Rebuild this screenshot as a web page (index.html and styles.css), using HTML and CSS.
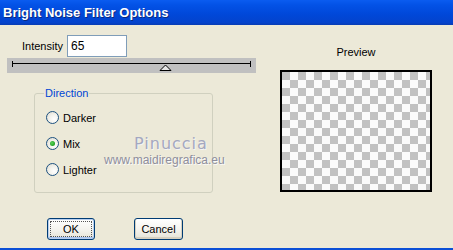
FILE: index.html
```html
<!DOCTYPE html>
<html>
<head>
<meta charset="utf-8">
<link rel="stylesheet" href="styles.css">
</head>
<body>
<div class="window">
  <div class="titlebar">Bright Noise Filter Options</div>
  <div class="content">
    <div class="left">
      <div class="intensity-row">
        <span class="label">Intensity</span>
        <div class="input">65</div>
      </div>
      <div class="slider">
        <svg width="249" height="15" viewBox="0 0 249 15">
          <line x1="5" y1="5.5" x2="243" y2="5.5" stroke="#000" stroke-width="1"/>
          <line x1="5.5" y1="3" x2="5.5" y2="9" stroke="#000" stroke-width="1"/>
          <line x1="243.5" y1="3" x2="243.5" y2="9" stroke="#000" stroke-width="1"/>
          <polygon points="153,12.5 158.5,7 164,12.5" fill="#e4e4e4" stroke="#000" stroke-width="1"/>
        </svg>
      </div>
      <fieldset class="group">
        <legend>Direction</legend>
        <div class="radio"><span class="dot"></span><span>Darker</span></div>
        <div class="radio"><span class="dot checked"></span><span>Mix</span></div>
        <div class="radio"><span class="dot"></span><span>Lighter</span></div>
      </fieldset>
      <div class="buttons">
        <button class="btn ok"><span class="focus">OK</span></button>
        <button class="btn cancel">Cancel</button>
      </div>
    </div>
    <div class="right">
      <div class="preview-label">Preview</div>
      <div class="preview"></div>
    </div>
  </div>
  <div class="watermark">
    <div class="wm-name">Pinuccia</div>
    <div class="wm-url">www.maidiregrafica.eu</div>
  </div>
</div>
</body>
</html>
```

FILE: styles.css
```css
html, body {
  margin: 0;
  padding: 0;
  background: #ece9d8;
}

.window {
  position: relative;
  width: 453px;
  height: 250px;
  box-sizing: border-box;
  background: #ece9d8;
  border-bottom: 2px solid #0b4fd6;
  font-family: "Liberation Sans", Arial, sans-serif;
  font-size: 11px;
  color: #000;
  overflow: hidden;
}

.titlebar {
  height: 25px;
  box-sizing: border-box;
  padding: 5px 0 0 3px;
  background: linear-gradient(#0a5cf0 0%, #0352e6 20%, #0047d8 60%, #0443cc 90%, #083cb4 100%);
  color: #fff;
  font-weight: bold;
  font-size: 13px;
  line-height: 15px;
  text-shadow: 1px 1px 0 #0a2a80;
}

.content {
  display: flex;
}

.left {
  width: 256px;
  display: flex;
  flex-direction: column;
}

.intensity-row {
  display: flex;
  align-items: center;
  margin-top: 10px;
  padding-left: 22px;
  height: 22px;
}

.label {
  width: 45px;
}

.input {
  width: 60px;
  height: 22px;
  box-sizing: border-box;
  border: 1px solid #7f9db9;
  background: #fff;
  padding: 3px 0 0 3px;
  font-size: 12px;
  line-height: 14px;
}

.slider {
  margin-left: 7px;
  width: 249px;
  height: 15px;
  margin-top: 1px;
  background: #c0c0c0;
}

.slider svg {
  display: block;
}

.group {
  margin: 14px 0 0 34px;
  width: 179px;
  height: 106px;
  box-sizing: border-box;
  border: 1px solid #d0d0bf;
  border-radius: 3px;
  padding: 11px 0 0 11px;
}

.group legend {
  color: #0046d5;
  padding: 0 1px;
  margin-left: -2px;
  line-height: 13px;
}

.radio {
  display: flex;
  align-items: center;
  height: 13px;
  margin-bottom: 13px;
  gap: 4px;
}

.dot {
  width: 13px;
  height: 13px;
  box-sizing: border-box;
  border-radius: 50%;
  border: 1px solid #1c5180;
  background: radial-gradient(circle at 65% 65%, #ffffff 0%, #f3f2ec 45%, #dcd9cc 100%);
  position: relative;
}

.dot.checked::after {
  content: "";
  position: absolute;
  left: 3px;
  top: 3px;
  width: 5px;
  height: 5px;
  border-radius: 50%;
  background: radial-gradient(circle at 40% 40%, #5bd35b, #21a121 70%);
}

.buttons {
  display: flex;
  margin: 25px 0 0 47px;
  gap: 39px;
}

.btn {
  height: 22px;
  box-sizing: border-box;
  border: 1px solid #003c74;
  border-radius: 3px;
  background: linear-gradient(#ffffff 0%, #f5f4ef 50%, #e6e3d6 100%);
  font-family: "Liberation Sans", Arial, sans-serif;
  font-size: 11px;
  color: #000;
  padding: 0;
  display: flex;
  align-items: center;
  justify-content: center;
}

.btn.ok {
  width: 48px;
  box-shadow: inset 0 0 0 1px #b8cff0, inset 0 -1px 0 1px #a8c2ee;
}

.btn.ok .focus {
  display: flex;
  align-items: center;
  justify-content: center;
  width: 40px;
  height: 14px;
  border: 1px dotted #555;
}

.btn.cancel {
  width: 49px;
  box-shadow: inset 0 -1px 0 1px #d6d0c0;
}

.right {
  flex: 1;
  display: flex;
  flex-direction: column;
}

.preview-label {
  margin-top: 21px;
  margin-left: 24px;
  width: 152px;
  text-align: center;
  line-height: 13px;
}

.preview {
  margin-top: 11px;
  margin-left: 24px;
  width: 152px;
  height: 122px;
  box-sizing: border-box;
  border: 2px solid #000;
  background: repeating-conic-gradient(#fbfbfb 0 25%, #c2c2c2 0 50%) 0 0 / 16px 16px;
}

.watermark {
  position: absolute;
  left: 104px;
  top: 135px;
  width: 120px;
  text-align: center;
  pointer-events: none;
}

.wm-name {
  font-family: "DejaVu Sans", sans-serif;
  font-size: 16px;
  letter-spacing: 1px;
  color: #a4a8bf;
  line-height: 18px;
  padding-left: 30px;
  text-align: left;
  text-shadow: 1px 1px 0 #f4f4f4;
}

.wm-url {
  font-family: "Liberation Sans", Arial, sans-serif;
  font-size: 12px;
  color: #8e8e9c;
  line-height: 14px;
  text-align: left;
  text-shadow: 1px 1px 0 #fafafa;
}
```
